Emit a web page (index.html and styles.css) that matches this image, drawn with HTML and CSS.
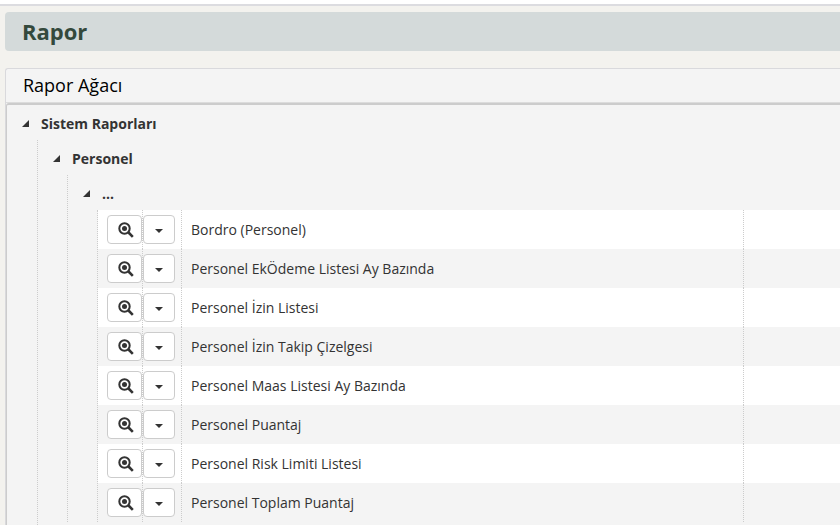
FILE: index.html
```
<!DOCTYPE html>
<html lang="tr">
<head>
    <meta charset="UTF-8">
    <meta name="viewport" content="width=device-width, initial-scale=1.0">
    <title>Rapor</title>
    <link rel="stylesheet" href="styles.css">
</head>
<body>
    <svg class="sprite" aria-hidden="true">
        <symbol id="icon-zoom" viewBox="0 0 16 16">
            <circle cx="6.5" cy="6.5" r="5.2" fill="none" stroke="#333" stroke-width="2"/>
            <circle cx="6.5" cy="6.5" r="2.5" fill="#333"/>
            <path d="M10.5 10.5L14.8 14.8" stroke="#333" stroke-width="2.6"/>
        </symbol>
        <symbol id="icon-caret" viewBox="0 0 8 4">
            <path d="M0 0H8L4 4Z" fill="#333"/>
        </symbol>
        <symbol id="icon-open" viewBox="0 0 7 7">
            <path d="M7 0V7H0Z" fill="#333"/>
        </symbol>
    </svg>

    <div class="topbar"></div>

    <main class="content">
        <h1 class="page-title">Rapor</h1>

        <section class="panel">
            <h2 class="panel-title">Rapor Ağacı</h2>
            <div class="tree">
                <div class="node">
                    <button class="toggle" type="button" aria-expanded="true"><svg class="open"><use href="#icon-open"/></svg>Sistem Raporları</button>
                </div>
                <div class="children children-root">
                    <div class="node">
                        <button class="toggle" type="button" aria-expanded="true"><svg class="open"><use href="#icon-open"/></svg>Personel</button>
                    </div>
                    <div class="children">
                        <div class="node">
                            <button class="toggle" type="button" aria-expanded="true"><svg class="open"><use href="#icon-open"/></svg>...</button>
                        </div>
                        <div class="children">
                            <table class="reports">
                                <colgroup>
                                    <col class="col-view">
                                    <col class="col-menu">
                                    <col class="col-name">
                                    <col>
                                </colgroup>
                                <tbody id="report-rows"></tbody>
                            </table>
                        </div>
                    </div>
                </div>
            </div>
        </section>
    </main>

    <script>
        const reports = [
            'Bordro (Personel)',
            'Personel EkÖdeme Listesi Ay Bazında',
            'Personel İzin Listesi',
            'Personel İzin Takip Çizelgesi',
            'Personel Maas Listesi Ay Bazında',
            'Personel Puantaj',
            'Personel Risk Limiti Listesi',
            'Personel Toplam Puantaj'
        ];

        document.getElementById('report-rows').innerHTML = reports.map(name => `
            <tr>
                <td class="cell-view"><button class="btn btn-view" type="button" aria-label="Görüntüle"><svg class="zoom"><use href="#icon-zoom"/></svg></button></td>
                <td><button class="btn btn-menu" type="button" aria-label="Seçenekler"><svg class="caret"><use href="#icon-caret"/></svg></button></td>
                <td class="cell-name">${name}</td>
                <td></td>
            </tr>`).join('');
    </script>
</body>
</html>
```
FILE: styles.css
```
* {
    box-sizing: border-box;
}

body {
    margin: 0;
    font-family: "Segoe UI", "Open Sans", "Noto Sans", sans-serif;
    font-size: 14px;
    color: #333;
    background-color: #f3f2ee;
}

.sprite {
    display: none;
}

.topbar {
    height: 6px;
    background-color: #fff;
    border-bottom: 2px solid #dcdce0;
}

.content {
    padding: 6px 0 0 5px;
}

.page-title {
    margin: 0 0 17px;
    padding: 0 17px;
    font-size: 22px;
    line-height: 39px;
    color: #34493c;
    background-color: #d4dada;
    border-radius: 4px 0 0 4px;
}

.panel {
    background-color: #f4f4f4;
    border: 1px solid #d9d9dc;
    border-right: 0;
    border-bottom: 0;
    border-radius: 3px 0 0 0;
}

.panel-title {
    margin: 0;
    padding: 0 17px;
    font-size: 18px;
    font-weight: 400;
    line-height: 33px;
    color: #000;
    border-bottom: 1px solid #dcdcdc;
}

.tree {
    border-top: 2px solid #ccc;
    border-left: 1px solid #ccc;
    border-radius: 3px 0 0 0;
}

.node {
    display: flex;
    align-items: center;
    height: 35px;
    padding-top: 2px;
    padding-left: 15px;
}

.toggle {
    display: flex;
    align-items: center;
    gap: 12px;
    padding: 0;
    font: inherit;
    font-weight: 700;
    color: #333;
    background: none;
    border: 0;
    cursor: pointer;
}

.open {
    width: 7px;
    height: 7px;
}

.children {
    margin-left: 29px;
    border-left: 1px dotted #ccc;
}

.children-root {
    margin-left: 30px;
    padding-bottom: 3px;
}

.reports {
    width: 100%;
    table-layout: fixed;
    border-collapse: separate;
    border-spacing: 0;
}

.reports tr {
    background-color: #fff;
}

.reports tr:nth-child(even) {
    background-color: #f4f4f4;
}

.reports td {
    height: 39px;
    padding: 0;
    border-right: 1px dotted #ccc;
}

.reports td:last-child {
    border-right: 0;
}

.col-view {
    width: 45px;
}

.col-menu {
    width: 39px;
}

.col-name {
    width: 75.7%;
}

.reports .cell-view,
.reports .cell-name {
    padding-left: 9px;
}

.btn {
    display: flex;
    align-items: center;
    justify-content: center;
    height: 29px;
    padding: 0;
    background-color: #fff;
    border: 1px solid #ccc;
    border-radius: 4px;
    cursor: pointer;
}

.btn:hover {
    background-color: #ebebeb;
}

.btn-view {
    width: 35px;
    padding-left: 3px;
}

.btn-menu {
    width: 32px;
    padding-top: 3px;
}

.zoom {
    width: 16px;
    height: 16px;
}

.caret {
    width: 8px;
    height: 4px;
}
```
